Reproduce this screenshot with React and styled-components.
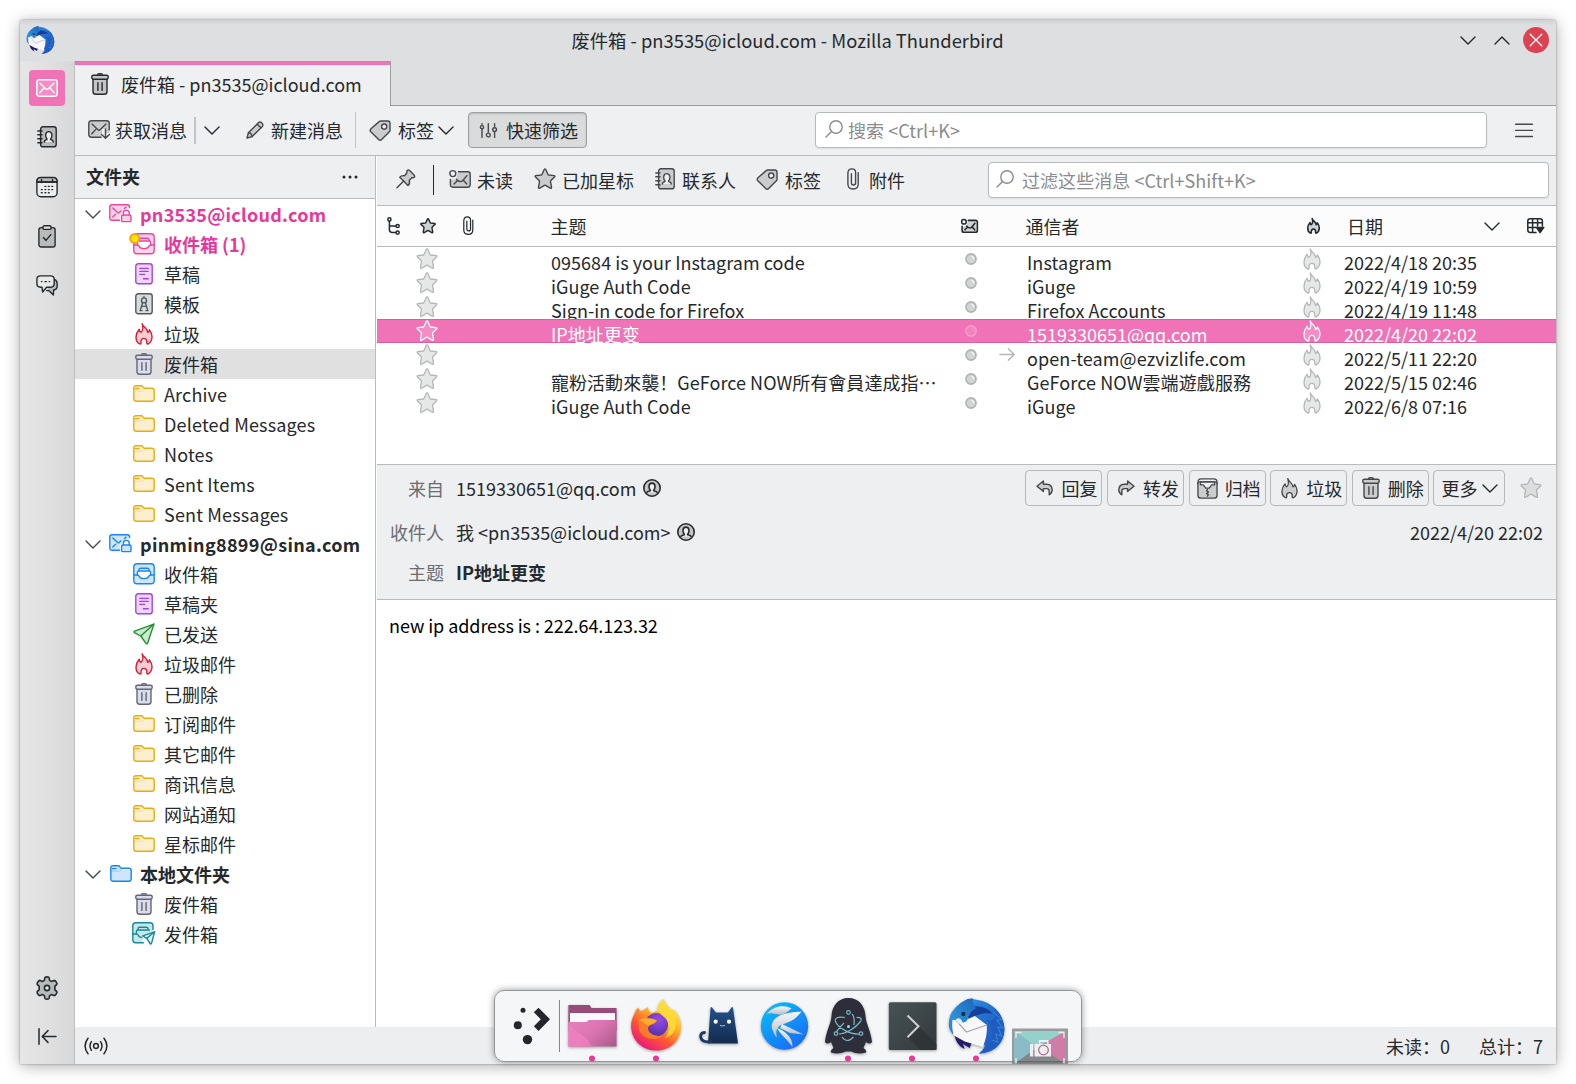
import React from "react";
import styled, { createGlobalStyle, css } from "styled-components";

const ink = "#26292c";
const line = "#b9bbbd";
const pink = "#f073b7";

const GlobalStyle = createGlobalStyle`
  html, body { margin: 0; padding: 0; background: #fff; }
  body {
    font-family: "Noto Sans CJK SC", "Noto Sans", sans-serif;
    font-size: 18px;
    line-height: 26px;
    color: ${ink};
    overflow: hidden;
  }
  * { box-sizing: border-box; }
`;

/* ---------- icons ---------- */

const Svg = styled.svg`
  display: block;
  flex: none;
  overflow: visible;
  color: ${(p) => p.$color || "#45484b"};
  --tint: ${(p) => p.$tint || "#cbcccd"};
  fill: none;
  stroke: currentColor;
  stroke-width: ${(p) => p.$stroke || 1.4};
  stroke-linecap: round;
  stroke-linejoin: round;
`;

const tint = { fill: "var(--tint)" };
const FLAME =
  "M7.2 .8C8 4 12.6 5.4 12.7 9.4C13.7 9 14.2 8.2 14.4 6.8C16 9 17 11 17 13.6C17 17 15.6 19.6 13.2 20.8C12 21.3 11.6 20.5 11.8 19C12.1 17 10.8 15.4 8.9 15.4C7.1 15.4 5.7 17 6 19C6.2 20.5 6 21.3 4.8 20.9C2.4 20 1 17.2 1 14C1 11 2.4 8.4 4.2 6.2C4.4 8 4.9 9.1 6 9.3C8.4 7.6 8.1 4.2 7.2 .8Z";
const STAR =
  "M10.2 1.5Q11 .2 11.8 1.5L13.9 6.3Q14.1 6.9 14.8 7L20.1 7.6Q21.5 7.9 20.5 9L16.9 12.5Q16.4 13 16.5 13.6L17.5 19.2Q17.6 20.9 16.2 20.2L11.6 17.4Q11 17.1 10.4 17.4L5.8 20.2Q4.4 20.9 4.5 19.2L5.5 13.6Q5.6 13 5.1 12.5L1.5 9Q.5 7.9 1.9 7.6L7.2 7Q7.9 6.9 8.1 6.3Z";

const GLYPHS = {
  mail: [22, 18, <>
    <rect x=".8" y=".8" width="20.4" height="16.4" rx="2.6" style={tint} />
    <path d="M4 4.2L10.2 10.2Q11 10.8 11.8 10.2L18 4.2M3.8 13.8L7.6 9.6M18.2 13.8L14.4 9.6" />
  </>],
  mailDown: [22, 20, <>
    <path d="M14 17.2H3.4Q.8 17.2 .8 14.6V3.4Q.8 .8 3.4 .8H18.6Q21.2 .8 21.2 3.4V8V13H17V9H14Z" fill="var(--tint)" stroke="none" />
    <path d="M13 17.2H3.4Q.8 17.2 .8 14.6V3.4Q.8 .8 3.4 .8H18.6Q21.2 .8 21.2 3.4V10" />
    <path d="M4 4L10.2 10Q11 10.6 11.8 10L18 4M3.8 13.8L7.6 9.6M17.5 9V18M13.6 14.4L17.5 18.3L21.4 14.4" />
  </>],
  mailLock: [23, 19, <>
    <path d="M11 16.2H3.2Q.8 16.2 .8 14V3Q.8 .8 3.2 .8H18.6Q20.6 .8 20.6 3V5Q16 5 14 8L11 11Z" fill="var(--tint)" stroke="none" />
    <path d="M10.5 16.2H3.2Q.8 16.2 .8 14V3Q.8 .8 3.2 .8H18.4Q20.6 .8 20.6 3V3.4" />
    <path d="M3.8 4L8.6 8.6Q9.4 9.2 10.2 8.6L11.8 7M3.8 13L6.6 10.2M15.6 4.4L17 3.2" />
    <rect x="12.6" y="11" width="9.4" height="6.6" rx="1.2" style={tint} />
    <path d="M14.4 11V9Q14.4 6.4 17.3 6.4Q20.2 6.4 20.2 9V11" />
  </>],
  unread: [22, 18, <>
    <path d="M9 2.2H19Q21.2 2.2 21.2 4.6V14.8Q21.2 17.2 19 17.2H3.8Q1.4 17.2 1.4 14.8V9.4H7Z" fill="var(--tint)" stroke="none" />
    <path d="M9.4 1.8H18.8Q21.2 1.8 21.2 4.2V14.8Q21.2 17.2 18.8 17.2H3.8Q1.4 17.2 1.4 14.8V9.4" />
    <path d="M5 14L8.6 10.4L7.4 9.2M8.6 10.4Q11.6 13 14 10.2L18 5.6M17.8 14L14.4 10.2" />
    <circle cx="3.8" cy="3.6" r="3" fill="none" />
  </>],
  book: [20, 22, <>
    <rect x="3.6" y=".8" width="15.6" height="20" rx="2.4" style={tint} />
    <path d="M.8 5H5M.8 8.8H5M.8 12.8H5M.8 16.8H5" />
    <path d="M7.4 16Q7.4 13.8 10 13.6Q10 12.6 9.2 11.8Q8.4 10.4 8.8 8Q9.4 5.6 11.8 5.6Q14.2 5.6 14.8 8Q15.2 10.4 14.4 11.8Q13.6 12.6 13.6 13.6Q16.2 13.8 16.2 16" fill="#eceeef" />
  </>],
  calendar: [22, 22, <>
    <rect x=".9" y="1.4" width="20.2" height="19.4" rx="4" fill="#eceded" />
    <path d="M1 6V5Q1 1.6 4.6 1.6H17.4Q21 1.6 21 5V6Z" style={tint} />
    <path d="M5.5 3.4V6.6M16.5 3.4V6.6M1 6H21" />
    <path d="M9 10.4h.8M12.4 10.4h.8M15.8 10.4h.8M5.4 13.6h.8M9 13.6h.8M12.4 13.6h.8M15.8 13.6h.8M5.4 16.8h.8M9 16.8h.8M12.4 16.8h.8" />
  </>],
  task: [18, 23, <>
    <rect x=".9" y="2.6" width="16.2" height="19.4" rx="2.2" style={tint} />
    <rect x="5" y=".8" width="8" height="3.6" rx="1.2" fill="#e4e5e5" />
    <path d="M5.4 12.6L8 15.4L12.8 9.6" />
  </>],
  chat: [22, 21, <>
    <path d="M18.4 4.4Q21.2 5.6 21.2 8.6V11Q21.2 14.4 17.6 15L17.4 20L12.6 15.6H10.6" style={tint} />
    <path d="M4.6 .9H14.6Q18.2 .9 18.2 4.4V8.6Q18.2 12.2 14.6 12.2H10.6L6.6 17L6 12.2H4.6Q.9 12.2 .9 8.6V4.4Q.9 .9 4.6 .9Z" fill="#e8e9e9" />
    <path d="M5.4 6.6h.6M9 6.6h1.4M13.2 6.6h.4" />
  </>],
  gear: [24, 24, <>
    <path d="M9.8 1.8Q10 .9 12 .9Q14 .9 14.2 1.8L14.6 4.4L16.4 5.4L19 4.4Q20 4.2 21.2 6Q22.4 7.6 21.8 8.4L19.8 10.4V13.6L21.8 15.6Q22.4 16.4 21.2 18Q20 19.8 19 19.6L16.4 18.6L14.6 19.6L14.2 22.2Q14 23.1 12 23.1Q10 23.1 9.8 22.2L9.4 19.6L7.6 18.6L5 19.6Q4 19.8 2.8 18Q1.6 16.4 2.2 15.6L4.2 13.6V10.4L2.2 8.4Q1.6 7.6 2.8 6Q4 4.2 5 4.4L7.6 5.4L9.4 4.4Z" style={tint} />
    <circle cx="12" cy="12" r="2.6" fill="#e4e5e5" />
  </>],
  collapse: [19, 17, <path d="M1 .8V16.2M18 8.5H4.4M10 2.6L4.2 8.5L10 14.4" />],
  antenna: [24, 18, <>
    <circle cx="12" cy="9" r="2.4" />
    <path d="M4 1.2Q-1.8 9 4 16.8M20 1.2Q25.8 9 20 16.8M7.4 4.6Q4.6 9 7.4 13.4M16.6 4.6Q19.4 9 16.6 13.4" />
  </>],
  trash: [18, 22, <>
    <path d="M2 6.4H16V18.4Q16 21.2 13.2 21.2H4.8Q2 21.2 2 18.4Z" style={tint} />
    <rect x=".8" y="2.2" width="16.4" height="4" rx="1.6" style={tint} />
    <path d="M6.6 1.2Q7 .7 9 .7Q11 .7 11.4 1.2M6.9 9.6V17.4M11.1 9.6V17.4" />
  </>],
  pencil: [18, 18, <>
    <path d="M1 17L2.4 11.8L12.6 1.6Q14 .4 15.8 2Q17.6 3.8 16.4 5.4L6.2 15.6Z" style={tint} />
    <path d="M11.2 3.2L14.8 6.8M2.4 11.8Q5.6 12 6.2 15.6" />
  </>],
  tag: [22, 21, <>
    <path d="M2 8.8L10.2 1.6Q10.8 1 11.8 1H18.8Q21 1 21 3.2V10.2Q21 11.2 20.4 11.8L12.6 19.6Q11 20.8 9.6 19.4L1.8 11.8Q.4 10.2 2 8.8Z" style={tint} />
    <circle cx="15.2" cy="6.6" r="2.6" fill="#eef0f1" />
  </>],
  sliders: [17, 15, <>
    <path d="M2 6.4V14.4M2 .8V1.6M8.3 .8V9M14.6 .8V3.4M14.6 8.8V14.4" />
    <circle cx="2" cy="4.2" r="1.6" /><circle cx="8.3" cy="12" r="1.9" /><circle cx="14.6" cy="6.6" r="1.9" />
  </>],
  search: [18, 18, <><circle cx="11" cy="7" r="6.2" /><path d="M6.6 11.4L1 17" /></>],
  menu: [18, 15, <path d="M.6 1.3H17.4M.6 7.4H17.4M.6 13.5H17.4" />],
  dots: [16, 4, <g fill="currentColor" stroke="none"><circle cx="2" cy="2" r="1.5" /><circle cx="8" cy="2" r="1.5" /><circle cx="14" cy="2" r="1.5" /></g>],
  down: [16, 9, <path d="M1 .9L8 8L15 .9" />],
  up: [16, 9, <path d="M1 8L8 .9L15 8" />],
  pin: [20, 20, <>
    <path d="M11 1.6Q12.2 .2 13.6 1.6L18 6Q19.4 7.4 18 8.6L15.8 8.8L13.2 11.4Q14.4 14.6 12 16.4L3.8 8.2Q5.6 6 8.6 6.8L10.8 4Z" style={tint} />
    <path d="M7.6 12L1 18.8" />
  </>],
  star: [22, 22, <path d={STAR} style={tint} />],
  clip: [12, 22, <path d="M11.2 4.6V16Q11.2 21 6.2 21Q.9 21 .9 16V5.6Q.9 .9 5 .9Q8.6 .9 8.6 4.6V14.8Q8.6 17 6.4 17Q4.4 17 4.4 14.8V5.8" />],
  thread: [13, 18, <>
    <circle cx="2.4" cy="2.4" r="1.6" /><circle cx="10.6" cy="9" r="1.6" /><circle cx="10.6" cy="15.6" r="1.6" />
    <path d="M2.4 4.2V12.6Q2.4 15.6 5.4 15.6H8.6M2.4 9H8.8" />
  </>],
  flame: [18, 22, <path d={FLAME} style={tint} />],
  picker: [18, 16, <>
    <path d="M9 14.4H3.2Q.8 14.4 .8 12V3.2Q.8 .8 3.2 .8H13Q15.4 .8 15.4 3.2V8M.8 4.8H15.4M5.6 .8V14.4M10.6 .8V8M.8 9.4H9" />
    <path d="M9.4 9.4H16.8L13.1 14.6Z" fill="currentColor" />
  </>],
  dot: [12, 12, <>
    <circle cx="6" cy="6" r="5.1" style={tint} />
    <path d="M7 3.4Q8.600 4 8.600 5.800" stroke="var(--shine, #f4f5f5)" strokeWidth="1.500" />
  </>],
  arrow: [16, 13, <path d="M.8 6.5H15M9.4 .8L15.2 6.5L9.4 12.2" />],
  person: [18, 18, <>
    <circle cx="9" cy="9" r="8.2" style={tint} />
    <path d="M3.9 13.4Q4.6 11.9 7.4 11.7Q7.4 10.9 6.7 10.2Q5.8 8.8 6 6.8Q6.6 4.1 9 4.1Q11.4 4.1 12 6.8Q12.2 8.8 11.3 10.2Q10.6 10.9 10.6 11.7Q13.4 11.9 14.1 13.4" fill="#eef0f1" />
  </>],
  reply: [17, 16, <path d="M7.4 1L1 6.2L7.4 11.4V8.6H10.6Q13.2 8.6 13.2 11V14.8Q16.2 13 16.2 10Q16 4.2 10.6 4.2H7.4ZM7.4 1V4.2" style={tint} />],
  forward: [17, 16, <path d="M9.6 1L16 6.2L9.6 11.4V8.6H6.4Q3.8 8.6 3.8 11V14.8Q.8 13 .8 10Q1 4.2 6.4 4.2H9.6Z" style={tint} />],
  archive: [22, 22, <>
    <path d="M1 6.4V4.4Q1 .9 4.4 .9H17.6Q21 .9 21 4.4V6.4" />
    <path d="M1 6.2V18Q1 21.1 4.2 21.1H17.8Q21 21.1 21 18V6.2Q21 4 18.8 4H3.2Q1 4 1 6.2Z" style={tint} />
    <path d="M3.600 4.200V7.200H6.600L9.200 10.600H12.800L15.400 7.200H18.400V4.200Z" fill="#eef0f1" />
    <path d="M11 12L10 13.400L12 14.800L10 16.200L12 17.600L10.800 19" />
  </>],
  inbox: [22, 22, <>
    <rect x=".8" y=".8" width="20.4" height="20" rx="3.4" style={tint} />
    <path d="M6 7.8V6.800Q6 5.200 7.600 5.200H14.400Q16 5.200 16 6.800V7.800" />
    <path d="M4.400 12V9.600Q4.400 8 6 8H16Q17.600 8 17.600 9.600V12C16.400 12 16 12.800 15.600 13.600C14.800 15.200 13.600 15.600 11 15.600C8.400 15.600 7.200 15.200 6.400 13.600C6 12.800 5.600 12 4.400 12Z" fill="#fff" />
    <path d="M1 12H4.400M17.600 12H21" />
  </>],
  draft: [18, 22, <>
    <rect x=".8" y=".8" width="16.4" height="20" rx="2.4" style={tint} />
    <path d="M4.8 5.4H13.2M4.8 8.4H13.2M4.8 11.4H9.6M8.4 15.8H13.2" />
  </>],
  template: [18, 22, <>
    <rect x=".8" y=".8" width="16.4" height="20" rx="2.4" style={tint} />
    <circle cx="9" cy="7.4" r="2.5" /><path d="M9 3.8V4.6M7.6 9.8L5.2 17.6H7M10.4 9.8L12.8 17.6H11M7 13.4H11" />
  </>],
  folder: [22, 17, <>
    <path d="M.8 13.6V2.8Q.8 .8 3 .8H8.2Q9.4 .8 10 1.8L11 3.2H18.8Q21.2 3.2 21.2 5.6V13.8Q21.2 16.2 18.8 16.2H3.2Q.8 16.2 .8 13.6Z" style={tint} />
    <path d="M2.200 3.600H6" />
    <path d="M12.800 4.600H19.400" stroke="#fffaf0" strokeWidth="1" />
    <path d="M1.500 6.200H8.200Q9.400 6.200 10.200 5.500L11 4.900" strokeWidth=".6" opacity=".45" />
  </>],
  sent: [22, 22, <>
    <path d="M20.9 1.1L1 8.4Q.8 9.4 1.8 9.8L7.8 13L13.2 20.6Q14.2 21.2 14.6 20.2Z" style={tint} />
    <path d="M20.9 1.1L7.8 13" />
  </>],
  outbox: [24, 23, <>
    <path d="M10 20.8H3.8Q.8 20.8 .8 17.8V3.8Q.8 .8 3.8 .8H18Q21 .8 21 3.8V9.6L12 14Z" fill="var(--tint)" stroke="none" />
    <path d="M11.4 20.8H3.8Q.8 20.8 .8 17.8V3.8Q.8 .8 3.8 .8H18Q21 .8 21 3.8V7.6" />
    <path d="M1 12H4.400Q5.800 12 6.400 13.600Q7.200 15.200 9.600 15.400M4.4 12V9.600Q4.4 8 6 8H17.4M6 7.8V6.800Q6 5.2 7.600 5.2H14.4Q16 5.2 16 6.800V7.800" />
    <path d="M22.6 9.8L10.8 13.8L14.8 16.4L18.4 22Q19.6 22 19.8 20.4Z" fill="#e9f6f7" />
    <path d="M22.6 9.8L14.8 16.4" />
  </>],
};

function Icon({ name, color, fill, stroke, w, children }) {
  const [gw, gh, art] = GLYPHS[name];
  const k = w ? w / gw : 1;
  return (
    <Svg width={gw * k} height={gh * k} viewBox={`0 0 ${gw} ${gh}`} $color={color} $tint={fill} $stroke={stroke}>
      {art}
      {children}
    </Svg>
  );
}

/* ---------- frame ---------- */

const Desktop = styled.div`
  position: relative;
  width: 1576px;
  height: 1084px;
  padding: 20px;
  overflow: hidden;
  background: #fff;
`;

const Window = styled.main`
  display: flex;
  flex-direction: column;
  width: 1536px;
  height: 1044px;
  border-radius: 3px 3px 0 0;
  overflow: hidden;
  background: #fff;
  box-shadow: 0 0 2px rgba(0, 0, 0, 0.45), 0 2px 16px rgba(0, 0, 0, 0.32);
`;

const TitleBar = styled.header`
  display: grid;
  grid-template-columns: 140px 1fr 140px;
  align-items: center;
  height: 41px;
  flex: none;
  padding-left: 6px;
  background: linear-gradient(#cfd1d2, #dddfe1 5px);
`;

const Caption = styled.h1`
  margin: 0;
  text-align: center;
  font-size: 18.35px;
  font-weight: 400;
  padding: 0 7px 1px 0;
`;

const WindowButtons = styled.div`
  display: flex;
  align-items: center;
  justify-content: flex-end;
  gap: 18px;
  padding: 0 7px 1px 0;
`;

const CloseButton = styled.button`
  display: grid;
  place-items: center;
  width: 26px;
  height: 26px;
  margin-left: -5px;
  padding: 0;
  border: 0;
  border-radius: 50%;
  background: #dd4253;
`;

const Main = styled.div`
  display: flex;
  flex: 1;
  min-height: 0;
`;

const Spaces = styled.nav`
  display: flex;
  flex-direction: column;
  align-items: center;
  width: 55px;
  flex: none;
  padding: 9px 0 10px;
  border-right: 1px solid #bdbebf;
  background: linear-gradient(90deg, #e6e6e6, #e0e0e0 50%, #d8d8d8);
`;

const SpaceButton = styled.button`
  display: grid;
  place-items: center;
  width: 36px;
  height: 36px;
  margin: 0 0 13.4px;
  padding: 0;
  border: 0;
  border-radius: 4px;
  background: ${(p) => (p.$active ? pink : "transparent")};
  &:nth-last-child(2) { margin-bottom: 12px; }
  &:last-child { margin-bottom: 0; }
`;

const Push = styled.div`
  flex: 1;
`;

const Workspace = styled.div`
  display: flex;
  flex-direction: column;
  flex: 1;
  min-width: 0;
`;

const TabStrip = styled.div`
  display: flex;
  height: 45px;
  flex: none;
  background: #dddfe1;
`;

const Tab = styled.div`
  display: flex;
  align-items: center;
  gap: 12px;
  width: 316px;
  padding: 1px 0 1px 16px;
  border-top: 1px solid #9a9c9e;
  border-right: 1px solid #9a9c9e;
  background: #eff0f2;
  box-shadow: inset 0 3px ${pink};
`;

const TabRest = styled.div`
  flex: 1;
  border-bottom: 1px solid #9a9c9e;
`;

const Toolbar = styled.div`
  display: flex;
  align-items: center;
  height: 50px;
  flex: none;
  padding: ${(p) => p.$pad || "0"};
  border-bottom: 1px solid ${line};
  background: ${(p) => p.$bg || "#eff0f2"};
`;

const Tool = styled.div`
  display: flex;
  align-items: center;
  width: ${(p) => p.$w}px;
  flex: none;
  gap: ${(p) => p.$gap ?? 6}px;
  white-space: nowrap;
  > svg { margin-bottom: ${(p) => p.$lift || 0}px; }
`;

const ToggleTool = styled.button`
  display: flex;
  align-items: center;
  gap: 9px;
  width: 119px;
  height: 36px;
  padding: 0 0 0 11px;
  font: inherit;
  color: inherit;
  border: 1px solid #9b9e9e;
  border-radius: 4px;
  background: #dadcdc;
  box-shadow: inset 0 1px 2px rgba(0, 0, 0, 0.16);
`;

const Rule = styled.i`
  width: ${(p) => p.$t || 1}px;
  height: ${(p) => p.$h}px;
  margin-right: ${(p) => p.$r}px;
  flex: none;
  background: ${(p) => p.$c || "#c2c4c5"};
`;

const SearchBox = styled.label`
  display: flex;
  align-items: center;
  gap: ${(p) => p.$gap}px;
  width: ${(p) => p.$w}px;
  height: 36px;
  margin-left: auto;
  padding-left: ${(p) => p.$pl}px;
  border: 1px solid #b8babb;
  border-radius: 4px;
  background: #fff;
  color: #8a8c8e;
  letter-spacing: 0.05px;
  box-shadow: 0 1px 2px rgba(0, 0, 0, 0.07);
  > svg { margin-bottom: 2px; }
`;

const Body = styled.div`
  display: flex;
  flex: 1;
  min-height: 0;
`;

/* ---------- folder pane ---------- */

const FolderPane = styled.aside`
  width: 301px;
  flex: none;
  border-right: 1px solid ${line};
  background: #fff;
`;

const PaneHeader = styled.div`
  display: flex;
  align-items: center;
  justify-content: space-between;
  height: 43px;
  padding: 0 17px 2px 11px;
  border-bottom: 1px solid ${line};
  background: #edeff1;
  font-weight: 700;
  > svg { margin-top: 2px; }
`;

const FolderRow = styled.div`
  display: flex;
  align-items: center;
  height: 30px;
  color: ${(p) => (p.$hot ? "#e8379b" : ink)};
  font-weight: ${(p) => (p.$bold ? 700 : 400)};
  background: ${(p) => (p.$selected ? "#e0e0e0" : "transparent")};
  white-space: nowrap;
`;

const IconCell = styled.span`
  display: flex;
  justify-content: center;
  width: ${(p) => p.$w}px;
  margin-left: ${(p) => p.$ml || 0}px;
  padding-bottom: ${(p) => p.$lift || 0}px;
  flex: none;
`;

const Name = styled.span`
  margin-left: ${(p) => p.$ml}px;
  letter-spacing: ${(p) => p.$track || 0}px;
`;

/* ---------- message list ---------- */

const MailPane = styled.section`
  display: flex;
  flex-direction: column;
  flex: 1;
  min-width: 0;
  padding-left: 1px;
  background: #fff;
`;

const HeadRow = styled.div`
  display: grid;
  grid-template-columns: 32px 37px 104.5px 401px 42px 32px 275px 34px 149px 43.5px 1fr;
  align-items: center;
  height: 41px;
  flex: none;
  border-bottom: 1px solid ${line};
  background: #fcfcfc;
`;

const HeadIcon = styled.span`
  display: flex;
  justify-content: center;
  padding-right: ${(p) => p.$r || 0}px;
`;

const MessageList = styled.div`
  height: 218px;
  flex: none;
  border-bottom: 1px solid ${line};
`;

const MessageRow = styled.div`
  display: grid;
  grid-template-columns: 39px 22px 113px 413.5px 14px 20.5px 28px 276px 18px 23px 1fr;
  height: 24px;
  white-space: nowrap;
  ${(p) =>
    p.$selected &&
    css`
      position: relative;
      overflow: hidden;
      color: #fff;
      background: ${pink};
      box-shadow: inset 0 1px #d95fa3, inset 0 -1px #d95fa3;
    `}
`;

const Cell = styled.span`
  grid-column: ${(p) => p.$col};
  padding-top: ${(p) => p.$top ?? 2}px;
  line-height: 26px;
  letter-spacing: ${(p) => p.$track || 0}px;
  --shine: ${(p) => p.$shine || "#f4f5f5"};
`;

/* ---------- message reader ---------- */

const MessageHeader = styled.div`
  display: grid;
  grid-template-rows: 46px 42px 38px;
  height: 135px;
  flex: none;
  padding-right: 13px;
  border-bottom: 1px solid ${line};
  background: #eeeff1;
`;

const HeaderLine = styled.div`
  display: flex;
  align-items: center;
`;

const HeaderLabel = styled.span`
  width: 67px;
  margin-right: 12px;
  flex: none;
  text-align: right;
  color: #6a6c6f;
`;

const HeaderValue = styled.span`
  display: flex;
  align-items: center;
  gap: 7px;
  font-weight: ${(p) => (p.$bold ? 700 : 400)};
`;

const Actions = styled.div`
  display: flex;
  align-items: center;
  gap: 4.6px;
  margin-left: auto;
`;

const ActionButton = styled.button`
  display: flex;
  align-items: center;
  justify-content: flex-end;
  gap: ${(p) => p.$gap ?? 8}px;
  width: ${(p) => p.$w || 77}px;
  height: 36px;
  padding: 0 ${(p) => p.$pr ?? 4}px 0 0;
  border: 1px solid #b6b8ba;
  border-radius: 4px;
  background: transparent;
  font: inherit;
  color: ${ink};
`;

const StarSlot = styled.span`
  padding-left: 10px;
  margin-right: 1px;
`;

const HeaderDate = styled.time`
  margin-left: auto;
`;

const MessageText = styled.article`
  flex: 1;
  padding: 12px 12px;
  color: #000;
  letter-spacing: -0.07px;
`;

const StatusBar = styled.footer`
  display: flex;
  align-items: center;
  height: 37px;
  flex: none;
  padding: 0 13px 0 9px;
  background: #edeef0;
`;

const Counter = styled.span`
  margin-left: ${(p) => p.$ml}px;
`;

/* ---------- dock ---------- */

const DockBar = styled.div`
  position: absolute;
  left: 494px;
  top: 990px;
  display: flex;
  width: 588px;
  height: 72px;
  padding-left: 1px;
  border: 1px solid #929495;
  border-radius: 10px;
  background: rgba(245, 246, 248, 0.97);
  box-shadow: 0 0 7px rgba(0, 0, 0, 0.4);
`;

const DockSlot = styled.svg`
  display: block;
  flex: none;
  overflow: visible;
`;

const Art = styled.g`
  filter: drop-shadow(0 1.5px 1.5px rgba(0, 0, 0, 0.35));
`;

function BirdArt({ id }) {
  return (
    <>
      <defs>
        <linearGradient id={`${id}b`} x1="0" y1="0" x2="1" y2="1">
          <stop offset="0" stopColor="#3aa0e6" />
          <stop offset=".45" stopColor="#2272cf" />
          <stop offset="1" stopColor="#2450b8" />
        </linearGradient>
        <linearGradient id={`${id}h`} x1="0" y1="1" x2="1" y2="0">
          <stop offset="0" stopColor="#2d9bd9" />
          <stop offset="1" stopColor="#1e62bd" />
        </linearGradient>
      </defs>
      <path d="M1 26C1 14 9 6 19 2C36 -1 55 10 56.5 30C57 45 46 55 31 55.5C34 53 36 51 37 48L34 40L5 36C2 33 1 29 1 26Z" fill={`url(#${id}b)`} />
      <path d="M6 33C7 42 10 48 17 51L15 46L22 50L24 44Z" fill="#241a6e" />
      <path d="M14 15C22 5 38 7 45 16C36 14 28 17 22 21Z" fill="#173f9a" />
      <path d="M38 22C44 26 46 34 43 44C40 51 36 54 31 55.5C48 55 57 44 56.5 30C56 22 52 14 46 10C50 18 48 24 38 22Z" fill="#1f5cc0" />
      <path d="M46 14L54 22L49 22L55 30L50 29L54 38L48 36L50 44L44 42" fill="none" stroke="#3f8be0" strokeWidth="1.2" opacity=".7" />
      <path d="M5 20L18 22L27 18L39 27Q40 37 35 49L17 43.500L6 37.500C4 31 4 25 5 20Z" fill="#f8f8fa" />
      <path d="M8 22L18.500 34L39 27" fill="none" stroke="#a9a7ad" strokeWidth="1.2" />
      <path d="M4 22C5 14 10 5 20 1C25 -.5 28 1 24 3C27 5 25 8 29 10C22 13 21 18 19 23L15 25C13 20 10 19 8 22Z" fill={`url(#${id}h)`} />
      <path d="M8 22C10 19 13 20 15 25L11 26Z" fill="#e4ebf2" />
      <circle cx="15.500" cy="16" r="2.200" fill="#20303f" />
    </>
  );
}

const RunningDot = () => <circle cx="32" cy="67.5" r="3" fill="#e5399c" />;

function Dock() {
  const slot = { width: 64, height: 69, viewBox: "0 0 64 69" };
  return (
    <DockBar>
      <DockSlot {...slot}>
        <g fill="#23272b">
          <circle cx="27" cy="19.3" r="2.5" />
          <circle cx="21.8" cy="34.3" r="4" />
          <circle cx="31.5" cy="48.6" r="4.7" />
        </g>
        <path d="M40.2 19L49.4 28.3L40.2 37.6" fill="none" stroke="#23272b" strokeWidth="6.6" />
        <path d="M63.500 9V61" stroke="#85878a" strokeWidth="1" />
      </DockSlot>
      <DockSlot {...slot}>
        <defs>
          <linearGradient id="fold" x1="0" y1="0.3" x2="1" y2="0.9">
            <stop offset="0" stopColor="#e57fbb" />
            <stop offset=".45" stopColor="#dc74b2" />
            <stop offset="1" stopColor="#ab5c8d" />
          </linearGradient>
        </defs>
        <Art>
          <path d="M8.4 14H29.6L31.4 17H56.6V40H8.4Z" fill="#974c7a" />
          <path d="M10 22H55V36H10Z" fill="#faf8fa" />
          <path d="M8.4 31H26L29 29H56.6V55.6H8.4Z" fill="url(#fold)" />
          <path d="M8.4 34L27 48L32 55.6H8.4Z" fill="#f181c2" opacity=".7" />
        </Art>
        <RunningDot />
      </DockSlot>
      <DockSlot {...slot}>
        <defs>
          <linearGradient id="fox" x1=".85" y1=".1" x2=".25" y2="1">
            <stop offset="0" stopColor="#fff14b" />
            <stop offset=".35" stopColor="#ffb024" />
            <stop offset=".62" stopColor="#ff5a33" />
            <stop offset="1" stopColor="#e6127f" />
          </linearGradient>
          <radialGradient id="globe" cx=".6" cy=".3" r=".8">
            <stop offset="0" stopColor="#9a4ae8" />
            <stop offset="1" stopColor="#4b2fa0" />
          </radialGradient>
        </defs>
        <Art>
          <path d="M14 16.500C15 18 16 19.500 17 20.500L24 16C24 19 25 21 28 22C31 20 33 20 34 20C33 16 36 11 39.500 8C40 11 43 14 45 17L48 18.500L51 19.500C58 28 59 40 53 49C45 61 27 63 16 54C6 46 5 32 10 24C11 21 12 18.500 14 16.500Z" fill="url(#fox)" />
          <circle cx="32.500" cy="33.500" r="11.500" fill="url(#globe)" />
          <path d="M39.500 8C41 14 46 16 50 24C54 32 52 44 41 47C47 39 45 31 41 27C37 23.500 35 22 34 20C33 16 36 11 39.500 8Z" fill="#ffdc3a" opacity=".85" />
          <path d="M14.500 29C20 26.500 27 27 33 29.500C31 34 25 33 24 37C24 43 32 46 39 44.500C33 51 18 49 15 38Z" fill="#ff7a26" />
          <path d="M14.500 29C20 26.500 27 27 33 29.500C30 33.500 26 33 24 34.500C21 33 19 30 14.500 29Z" fill="#ffae2c" />
        </Art>
        <RunningDot />
      </DockSlot>
      <DockSlot {...slot}>
        <defs>
          <linearGradient id="cat" x1="0" y1="0" x2="0" y2="1">
            <stop offset="0" stopColor="#23508a" />
            <stop offset="1" stopColor="#142a4d" />
          </linearGradient>
        </defs>
        <Art>
          <path d="M22.500 17Q23 15.500 24 16.500L28 21.500H40L43.500 16.500Q44.600 15.500 45 17L50 52.500H20Z" fill="url(#cat)" />
          <path d="M23 50.500Q14 52 12.600 46Q12.400 41.500 16.500 41.500" fill="none" stroke="#1a3765" strokeWidth="2.800" strokeLinecap="round" />
          <circle cx="27.700" cy="30.700" r="2.100" fill="#fff" />
          <circle cx="41" cy="30.700" r="2.100" fill="#fff" />
          <path d="M32 34.500Q34.400 35.400 37 34.500" stroke="#b6c2d4" fill="none" />
        </Art>
      </DockSlot>
      <DockSlot {...slot}>
        <defs>
          <linearGradient id="wave" x1="0" y1="0" x2=".7" y2="1">
            <stop offset="0" stopColor="#06c4fb" />
            <stop offset="1" stopColor="#1a6cf5" />
          </linearGradient>
          <linearGradient id="silver" x1="0" y1="0" x2="0" y2="1">
            <stop offset="0" stopColor="#f8f8f9" />
            <stop offset="1" stopColor="#b9bcc4" />
          </linearGradient>
        </defs>
        <Art>
          <circle cx="32.500" cy="35" r="23.700" fill="url(#wave)" />
          <path d="M14.500 23C21 15 32 13 39.500 17.500C37 19 35 22 30 23.500C25 24.500 21 21 14.500 23Z" fill="url(#silver)" />
          <path d="M49.500 20.500C42 21 34 21.500 27 25C20 28.500 18 35 21 40C22 43 23 45 25 46.500C23 40 25 35 31 33C39 31 45 27 49.500 20.500Z" fill="url(#silver)" />
          <path d="M30 33L51.500 43.500L38 42L28 37Z" fill="url(#silver)" />
          <path d="M25 37C33 40 41 46 40.500 56C35 48 29 44 25 37Z" fill="url(#silver)" />
        </Art>
      </DockSlot>
      <DockSlot {...slot}>
        <Art>
          <path d="M32.500 7C43 7 49 15 49.500 25C50 33 55 40 56 51Q54 54 50 51L47.500 57Q51 59 50 61.500Q42 64 35 60.500H30Q22 64 15 61.500Q14 59 17.500 57L15 51Q11 54 9 51C10 40 15 33 15.500 25C16 15 22 7 32.500 7Z" fill="#2e2d3a" />
        </Art>
        <g fill="none" stroke="#78bac6" strokeWidth="1.200">
          <path d="M36 23C38 25 38.500 30 38 34M23 43C31 43 40 36 44.500 30.500Q47 26 40.500 26.500M29 26.500Q18 25 19.500 30.500C22 37 34 43.500 43 43M26 46Q31 53 37.500 46M20.500 41C22 38 25 35 28 32" />
          <circle cx="32.500" cy="21.500" r="1.800" />
          <circle cx="20" cy="42.600" r="1.800" />
          <circle cx="45" cy="42.600" r="1.800" />
        </g>
        <circle cx="32.500" cy="35.500" r="1.500" fill="#9be0e8" />
        <RunningDot />
      </DockSlot>
      <DockSlot {...slot}>
        <defs>
          <linearGradient id="term" x1="0" y1="0" x2="1" y2="1">
            <stop offset="0" stopColor="#475355" />
            <stop offset="1" stopColor="#33383b" />
          </linearGradient>
        </defs>
        <Art>
          <rect x="8.800" y="11.300" width="47.700" height="47.700" rx="1.500" fill="url(#term)" />
        </Art>
        <path d="M39 35.500L56.500 53V59H40L28 46.500Z" fill="#2c3133" opacity=".7" />
        <path d="M27.500 24.500L38.500 35.300L27.500 46.300" fill="none" stroke="#d0d0d0" strokeWidth="2" />
        <RunningDot />
      </DockSlot>
      <DockSlot {...slot}>
        <Art>
          <g transform="translate(3.800 7)"><BirdArt id="dock" /></g>
        </Art>
        <RunningDot />
      </DockSlot>
      <DockSlot {...slot}>
        <g opacity=".72">
          <rect x="4" y="37.500" width="56" height="35.500" fill="#74777a" />
          <path d="M6.500 40H57.500V42L32 57L6.500 72Z" fill="#6fc3ba" />
          <path d="M6.500 40L30 57L6.500 72.500Z" fill="#62a6b6" />
          <path d="M57.500 40V72.500L38 60Z" fill="#c04f88" />
          <path d="M57.500 40L28 57L38 62L57.500 60Z" fill="#c04f88" />
          <path d="M6.500 72.500L30 56L57.500 72.500Z" fill="#595c60" />
        </g>
        <path d="M8 47V41.500H13.500M50.500 41.500H56V47M8 67V72.500M56 67V72.500" fill="none" stroke="#e6f2f2" strokeWidth="1.300" />
        <rect x="22" y="53" width="3.200" height="12.500" fill="#f0f0f2" />
        <path d="M26.500 53H31V49H40.500V53H43V65.500H26.500ZM32.400 51V53H39V51Z" fillRule="evenodd" fill="#f0f0f2" />
        <circle cx="35.500" cy="59" r="4.800" fill="none" stroke="#b4698f" strokeWidth="1.300" />
      </DockSlot>
    </DockBar>
  );
}

/* ---------- data ---------- */

const pal = {
  yellow: ["#eeab0a", "#fbefd0"],
  purple: ["#a640f0", "#ecd6fc"],
  grey: ["#55585a", "#d9dadb"],
  red: ["#dc1a34", "#f8ccd3"],
  slate: ["#63647f", "#dcdce6"],
  blue: ["#1a86f2", "#cfe5fd"],
  green: ["#1f9230", "#cde9cf"],
  teal: ["#128c9a", "#cbe6e9"],
  pink: ["#e8489f", "#fbd3e8"],
};

const plainFolders = (names, track) => names.map((name) => ({ icon: "folder", hue: "yellow", name, track }));

const FOLDERS = [
  { root: true, icon: "mailLock", hue: "pink", name: "pn3535@icloud.com", hot: true, track: 0.26 },
  { icon: "inbox", hue: "pink", name: "收件箱 (1)", hot: true, bold: true, fresh: true },
  { icon: "draft", hue: "purple", name: "草稿" },
  { icon: "template", hue: "grey", name: "模板" },
  { icon: "flame", hue: "red", name: "垃圾" },
  { icon: "trash", hue: "slate", name: "废件箱", selected: true },
  ...plainFolders(["Archive", "Deleted Messages", "Notes", "Sent Items", "Sent Messages"], 0.16),
  { root: true, icon: "mailLock", hue: "blue", name: "pinming8899@sina.com", track: 0.32 },
  { icon: "inbox", hue: "blue", name: "收件箱" },
  { icon: "draft", hue: "purple", name: "草稿夹" },
  { icon: "sent", hue: "green", name: "已发送" },
  { icon: "flame", hue: "red", name: "垃圾邮件" },
  { icon: "trash", hue: "slate", name: "已删除" },
  ...plainFolders(["订阅邮件", "其它邮件", "商讯信息", "网站通知", "星标邮件"], 0),
  { root: true, icon: "folder", hue: "blue", name: "本地文件夹" },
  { icon: "trash", hue: "slate", name: "废件箱" },
  { icon: "outbox", hue: "teal", name: "发件箱" },
];

const MESSAGES = [
  ["095684 is your Instagram code", "Instagram", "2022/4/18 20:35"],
  ["iGuge Auth Code", "iGuge", "2022/4/19 10:59"],
  ["Sign-in code for Firefox", "Firefox Accounts", "2022/4/19 11:48"],
  ["IP地址更变", "1519330651@qq.com", "2022/4/20 22:02", { selected: true }],
  ["", "open-team@ezvizlife.com", "2022/5/11 22:20", { outgoing: true }],
  ["寵粉活動來襲！GeForce NOW所有會員達成指…", "GeForce NOW雲端遊戲服務", "2022/5/15 02:46"],
  ["iGuge Auth Code", "iGuge", "2022/6/8 07:16"],
];

function Folder({ f }) {
  const [color, fill] = pal[f.hue];
  return (
    <FolderRow $hot={f.hot} $bold={f.root || f.bold} $selected={f.selected}>
      {f.root && (
        <IconCell $w={16} $ml={10}><Icon name="down" color="#45484b" /></IconCell>
      )}
      <IconCell $w={f.root ? 23 : 24} $ml={f.root ? 8 : 57} $lift={1}>
        <Icon name={f.icon} color={color} fill={fill}>
          {f.fresh && <circle cx="1.600" cy="5.400" r="4.500" fill="#ffe600" stroke="#ff9c12" strokeWidth="1.700" />}
        </Icon>
      </IconCell>
      <Name $ml={8} $track={f.track}>{f.name}</Name>
    </FolderRow>
  );
}

function Message({ m: [subject, who, date, flags = {}] }) {
  const sel = flags.selected;
  const color = sel ? "#fff" : "#b4b6b7";
  const fill = sel ? "#f48cc5" : "#e6e7e7";
  return (
    <MessageRow $selected={sel}>
      <Cell $col={2} $top={1}><Icon name="star" color={color} fill={fill} stroke={1.3} /></Cell>
      <Cell $col={4} $track={0.04}>{subject}</Cell>
      <Cell $col={5} $top={6} $shine={sel && "#f490c7"}><Icon name="dot" color={sel ? "#f59ccc" : "#b2b4b4"} fill={sel ? "#f281be" : "#d2d4d4"} stroke={1.6} /></Cell>
      <Cell $col={7} $top={5}>{flags.outgoing && <Icon name="arrow" color="#b4b6b7" />}</Cell>
      <Cell $col={8} $track={sel ? 0 : 0.09}>{who}</Cell>
      <Cell $col={9} $top={1}><Icon name="flame" color={color} fill={fill} stroke={1.3} /></Cell>
      <Cell $col={11}>{date}</Cell>
    </MessageRow>
  );
}

export default function App() {
  const dark = "#26292c";
  return (
    <Desktop>
      <GlobalStyle />
      <Window>
        <TitleBar>
          <svg width="28.500" height="28.500" viewBox="0 0 57 57"><BirdArt id="title" /></svg>
          <Caption>废件箱 - pn3535@icloud.com - Mozilla Thunderbird</Caption>
          <WindowButtons>
            <Icon name="down" color={dark} />
            <Icon name="up" color={dark} />
            <CloseButton>
              <Svg width="12" height="12" viewBox="0 0 12 12" $color="#fff" $stroke={1.3}><path d="M.2 .2L11.8 11.8M11.8 .2L.2 11.8" /></Svg>
            </CloseButton>
          </WindowButtons>
        </TitleBar>
        <Main>
          <Spaces>
            <SpaceButton $active><Icon name="mail" color="#fff" fill="#f48cc5" stroke={1.5} /></SpaceButton>
            <SpaceButton><Icon name="book" color={dark} fill="#b9bbbb" /></SpaceButton>
            <SpaceButton><Icon name="calendar" color={dark} fill="#b9bbbb" /></SpaceButton>
            <SpaceButton><Icon name="task" color={dark} fill="#b9bbbb" /></SpaceButton>
            <SpaceButton><Icon name="chat" color={dark} fill="#b9bbbb" /></SpaceButton>
            <Push />
            <SpaceButton><Icon name="gear" color={dark} fill="#b9bbbb" stroke={1.6} /></SpaceButton>
            <SpaceButton><Icon name="collapse" color={dark} stroke={1.5} /></SpaceButton>
          </Spaces>
          <Workspace>
            <TabStrip>
              <Tab>
                <Icon name="trash" color={dark} fill="#c4c6c7" />
                <span>废件箱 - pn3535@icloud.com</span>
              </Tab>
              <TabRest />
            </TabStrip>
            <Toolbar $pad="0 23px 1px 13px">
              <Tool $w={106} $gap={5}><Icon name="mailDown" />获取消息</Tool>
              <Rule $t={2} $h={27} $r={8} />
              <Tool $w={42}><Icon name="down" color={dark} /></Tool>
              <Tool $w={109} $gap={7}><Icon name="pencil" />新建消息</Tool>
              <Rule $h={36} $r={13} />
              <Tool $w={99} $gap={7}>
                <Icon name="tag" />
                <span>标签</span>
                <IconCell $w={16} $ml={-3}><Icon name="down" color={dark} /></IconCell>
              </Tool>
              <ToggleTool><Icon name="sliders" />快速筛选</ToggleTool>
              <SearchBox $w={672} $pl={9} $gap={5}><Icon name="search" color="#8a8c8e" />搜索 &lt;Ctrl+K&gt;</SearchBox>
              <Tool $w={46} $gap={0}><Rule $h={0} $r={27} /><Icon name="menu" /></Tool>
            </Toolbar>
            <Body>
              <FolderPane>
                <PaneHeader>文件夹<Icon name="dots" color={dark} /></PaneHeader>
                {FOLDERS.map((f, i) => <Folder key={i} f={f} />)}
              </FolderPane>
              <MailPane>
                <Toolbar $pad="0 7px 1px 19px" $bg="#edeff1">
                  <Tool $w={37} $lift={2}><Icon name="pin" /></Tool>
                  <Rule $h={30} $r={15} $c="#26292c" />
                  <Tool $w={85} $lift={2}><Icon name="unread" />未读</Tool>
                  <Tool $w={121} $gap={6} $lift={2}><Icon name="star" />已加星标</Tool>
                  <Tool $w={101} $gap={7} $lift={2}><Icon name="book" />联系人</Tool>
                  <Tool $w={91} $gap={7} $lift={2}><Icon name="tag" />标签</Tool>
                  <Tool $w={60} $gap={10} $lift={2}><Icon name="clip" />附件</Tool>
                  <SearchBox $w={561} $pl={7} $gap={8}><Icon name="search" color="#8a8c8e" />过滤这些消息 &lt;Ctrl+Shift+K&gt;</SearchBox>
                </Toolbar>
                <HeadRow>
                  <HeadIcon><Icon name="thread" color={dark} stroke={1.5} /></HeadIcon>
                  <HeadIcon><Icon name="star" color={dark} w={16} stroke={2} fill="#cfd1d2" /></HeadIcon>
                  <HeadIcon $r={60}><Icon name="clip" color={dark} w={10.5} /></HeadIcon>
                  <span>主题</span>
                  <HeadIcon $r={6}><Icon name="unread" color={dark} w={17} stroke={2} fill="#cfd1d2" /></HeadIcon>
                  <span />
                  <span>通信者</span>
                  <HeadIcon $r={9}><Icon name="flame" color={dark} w={13} stroke={2.2} fill="#cfd1d2" /></HeadIcon>
                  <Name $ml={12.5}>日期</Name>
                  <Icon name="down" color={dark} />
                  <Icon name="picker" color={dark} stroke={1.5} />
                </HeadRow>
                <MessageList>
                  {MESSAGES.map((m, i) => <Message key={i} m={m} />)}
                </MessageList>
                <MessageHeader>
                  <HeaderLine>
                    <HeaderLabel>来自</HeaderLabel>
                    <HeaderValue>1519330651@qq.com<Icon name="person" color={dark} fill="#c4c6c7" stroke={1.6} /></HeaderValue>
                    <Actions>
                      <ActionButton><Icon name="reply" />回复</ActionButton>
                      <ActionButton><Icon name="forward" />转发</ActionButton>
                      <ActionButton $gap={7}><Icon name="archive" w={21} />归档</ActionButton>
                      <ActionButton><Icon name="flame" w={17} />垃圾</ActionButton>
                      <ActionButton><Icon name="trash" />删除</ActionButton>
                      <ActionButton $w={72} $gap={5} $pr={6}>更多<Icon name="down" color={dark} /></ActionButton>
                      <StarSlot><Icon name="star" color="#b4b6b7" fill="#dcdede" stroke={1.3} /></StarSlot>
                    </Actions>
                  </HeaderLine>
                  <HeaderLine>
                    <HeaderLabel>收件人</HeaderLabel>
                    <HeaderValue>我 &lt;pn3535@icloud.com&gt;<Icon name="person" color={dark} fill="#c4c6c7" stroke={1.6} /></HeaderValue>
                    <HeaderDate>2022/4/20 22:02</HeaderDate>
                  </HeaderLine>
                  <HeaderLine>
                    <HeaderLabel>主题</HeaderLabel>
                    <HeaderValue $bold>IP地址更变</HeaderValue>
                  </HeaderLine>
                </MessageHeader>
                <MessageText>new ip address is : 222.64.123.32</MessageText>
              </MailPane>
            </Body>
            <StatusBar>
              <Icon name="antenna" color={dark} stroke={1.5} />
              <Push />
              <Counter>未读：0</Counter>
              <Counter $ml={29}>总计：7</Counter>
            </StatusBar>
          </Workspace>
        </Main>
      </Window>
      <Dock />
    </Desktop>
  );
}
